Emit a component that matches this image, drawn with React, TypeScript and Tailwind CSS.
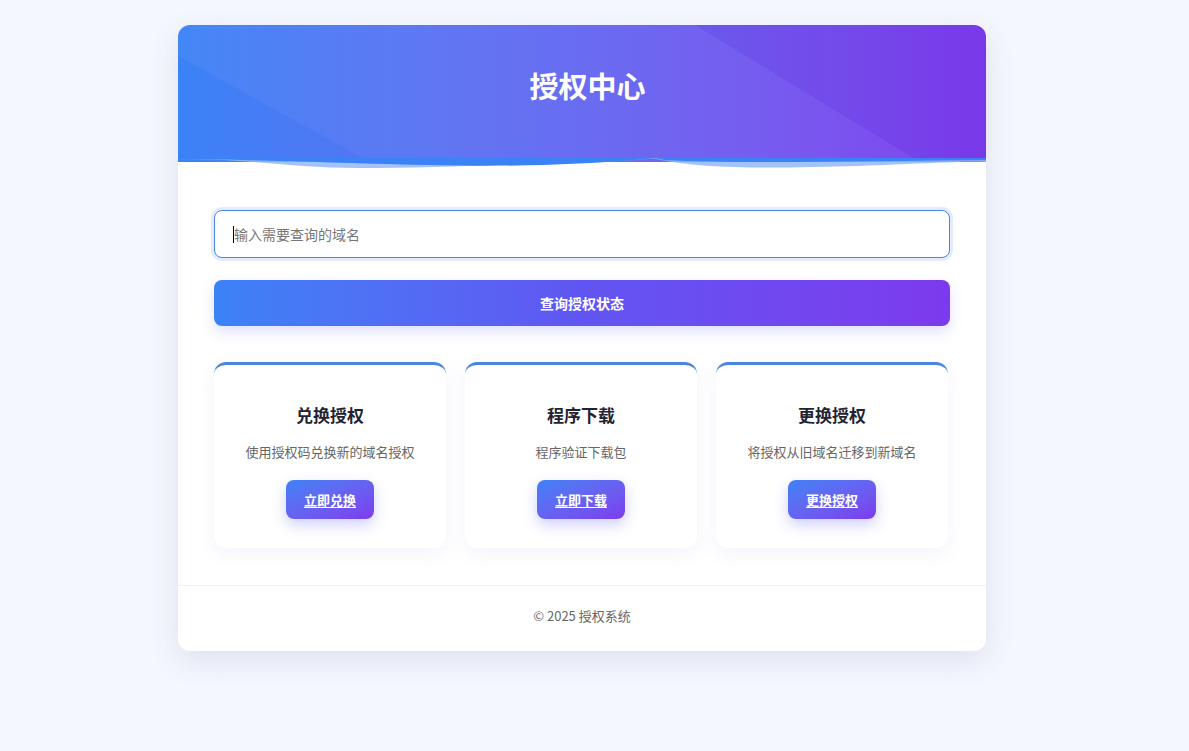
const font = { fontFamily: '"Noto Sans CJK SC", "Noto Sans", sans-serif' };

const actions = [
  { title: "兑换授权", desc: "使用授权码兑换新的域名授权", btn: "立即兑换" },
  { title: "程序下载", desc: "程序验证下载包", btn: "立即下载" },
  { title: "更换授权", desc: "将授权从旧域名迁移到新域名", btn: "更换授权" },
];

function HeaderShapes() {
  return (
    <svg className="absolute inset-0 w-full h-full" viewBox="0 0 808 137" preserveAspectRatio="none">
      <polygon points="-56,0 517,0 742,137 192,137" fill="#ffffff" opacity="0.045" />
      <polygon points="517,0 808,0 808,137 742,137" fill="#5b21b6" opacity="0.05" />
    </svg>
  );
}

function HeaderWave() {
  return (
    <svg
      className="absolute left-0 bottom-[-12px] w-full h-[16px]"
      viewBox="0 0 808 16"
      preserveAspectRatio="none"
    >
      <path
        d="M0 2 C60 -1 110 10 180 10 C260 10 320 6 420 4 C460 3 470 0 478 1 C530 12 600 10 680 8 C740 6 780 3 808 4 L808 0 L0 0 Z"
        fill="#93b8f7"
        opacity="0.85"
      />
      <path
        d="M0 2 C40 0 120 4 250 7 C330 9 400 7 468 1 C474 0 480 0 486 2 C560 6 700 3 808 2 L808 0 L0 0 Z"
        fill="#3b82f6"
      />
    </svg>
  );
}

export default function App() {
  return (
    <div className="min-h-screen bg-[#f5f7fe] pt-[25px] pr-[25px]" style={font}>
      <div className="w-[808px] mx-auto bg-white rounded-xl shadow-[0_10px_30px_rgba(60,70,120,0.12)]">
        <div className="relative h-[137px] rounded-t-xl bg-gradient-to-r from-[#3b82f6] via-[#6366f1] to-[#7c3aed] flex items-center justify-center">
          <div className="absolute inset-0 overflow-hidden rounded-t-xl">
            <HeaderShapes />
          </div>
          <h1 className="relative text-white text-[29px] font-bold pb-[16px] pl-[11px]">授权中心</h1>
          <HeaderWave />
        </div>

        <div className="px-[36px] pt-[48px] pb-[37px]">
          <div className="h-[48px] rounded-lg border border-[#4a86e8] bg-white shadow-[0_0_0_3px_rgba(59,130,246,0.15)] flex items-center px-[18px]">
            <span className="w-px h-[17px] bg-black" />
            <input
              className="flex-1 outline-none text-[14px] text-gray-700 placeholder:text-[#777] bg-transparent"
              placeholder="输入需要查询的域名"
            />
          </div>

          <button className="mt-[22px] w-full h-[46px] rounded-lg bg-gradient-to-r from-[#3b82f6] via-[#6055f2] to-[#7c3aed] text-white text-[14px] font-bold shadow-[0_6px_14px_rgba(99,102,241,0.2)]">
            查询授权状态
          </button>

          <div className="mt-[36px] grid grid-cols-3 gap-[19px] pr-[2px]">
            {actions.map((a) => (
              <div
                key={a.title}
                className="h-[186px] rounded-xl border-t-[3px] border-[#4a86e0] bg-white shadow-[0_6px_18px_rgba(120,100,220,0.08)] flex flex-col items-center pt-[38px]"
              >
                <h3 className="text-[17px] font-bold text-[#1f2433] leading-[24px]">{a.title}</h3>
                <p className="mt-[15px] text-[13px] text-[#666] leading-[20px]">{a.desc}</p>
                <button className="mt-[18px] h-[39px] px-[18px] rounded-lg bg-gradient-to-br from-[#3b82f6] to-[#7c3aed] text-white text-[13px] font-bold underline underline-offset-2 shadow-[0_6px_14px_rgba(99,102,241,0.3)]">
                  {a.btn}
                </button>
              </div>
            ))}
          </div>
        </div>

        <div className="border-t border-[#eef0f4] h-[66px] pb-[6px] flex items-center justify-center text-[13px] text-[#666]">
          © 2025 授权系统
        </div>
      </div>
    </div>
  );
}
